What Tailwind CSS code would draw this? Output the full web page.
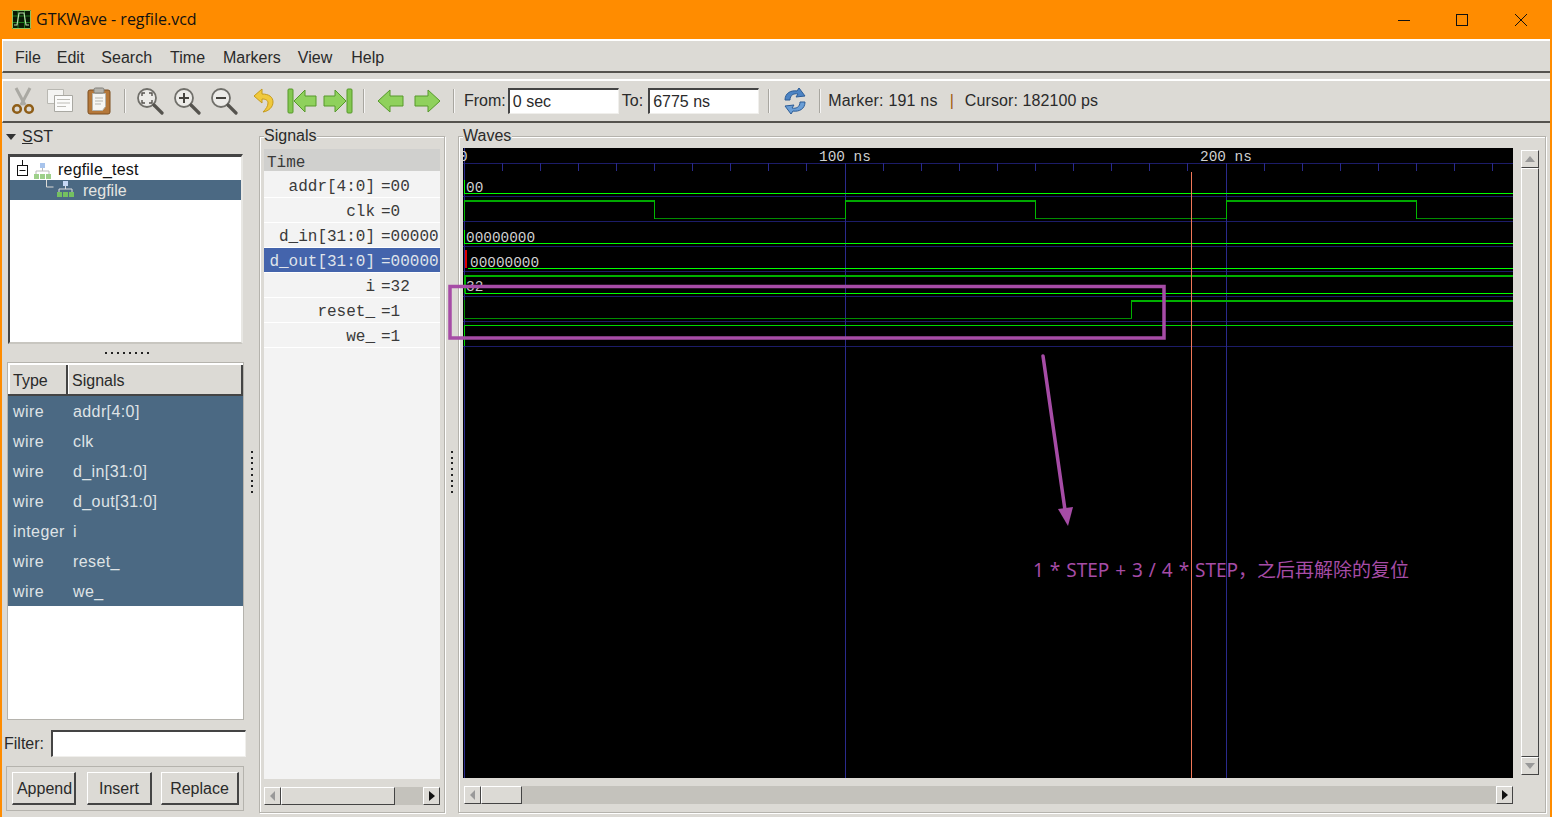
<!DOCTYPE html>
<html lang="en">
<head>
  <meta charset="UTF-8">
  <title>GTKWave - regfile.vcd</title>
  <script src="https://cdn.jsdelivr.net/npm/@tailwindcss/browser@4"></script>
</head>
<body class="bg-[#dcdad5] overflow-hidden">
<div class="relative w-[1552px] h-[817px] flex flex-col overflow-hidden border-x-2 border-[#ff8c00] bg-[#dcdad5] font-['Liberation_Sans',sans-serif] text-[16px] text-[#2a2a2a]">

  <!-- title bar -->
  <div class="h-[39px] -mx-[2px] shrink-0 bg-[#ff8c00] flex items-center text-[#111]">
    <svg class="ml-[12px] mt-[-1px]" width="19" height="19" viewBox="0 0 19 19">
      <rect width="19" height="19" fill="#0a1a05"/>
      <path d="M0.500 0.500h18v18h-18z" fill="none" stroke="#8fc060"/>
      <path d="M6 1v17M12.500 1v17M1 6h17M1 12.500h17" stroke="#1f7a1f"/>
      <path d="M2 15h3l2-12h5l2 12h3" fill="none" stroke="#b8d8a8" stroke-width="1.200"/>
    </svg>
    <span class="ml-[5px] mt-[-2px] font-['Open_Sans',sans-serif] text-[16px]">GTKWave - regfile.vcd</span>
    <div class="ml-auto flex items-center">
      <svg width="12" height="12" viewBox="0 0 12 12" class="mr-[46px]"><path d="M0 6.500h12" stroke="#111"/></svg>
      <svg width="12" height="12" viewBox="0 0 12 12" class="mr-[47px]"><rect x="0.500" y="0.500" width="11" height="11" fill="none" stroke="#111"/></svg>
      <svg width="12" height="12" viewBox="0 0 12 12" class="mr-[25px]"><path d="M0 0l12 12M12 0L0 12" stroke="#111"/></svg>
    </div>
  </div>

  <!-- menu bar -->
  <div class="h-[34px] shrink-0 flex items-center gap-[21px] pl-[12px] pt-[3px] bg-[#dcdad5] border-t-2 border-t-white border-b-2 border-b-[#55534e] border-l border-l-white">
    <span>File</span><span class="-ml-[5px]">Edit</span><span class="-ml-[4px]">Search</span><span class="-ml-[3px]">Time</span><span class="-ml-[3px]">Markers</span><span class="-ml-[4px]">View</span><span class="-ml-[2px]">Help</span>
  </div>

  <!-- toolbar -->
  <div class="mt-[6px] h-[44px] shrink-0 flex items-center pl-[8px] border-t-2 border-t-white border-b-2 border-b-[#55534e] border-l border-l-white">
    <!-- cut -->
    <svg width="24" height="28" viewBox="0 0 24 28">
      <path d="M5 1l9 17M19 1l-9 17" stroke="#aaa9a3" stroke-width="3"/>
      <circle cx="6" cy="22" r="3.800" fill="#dcdad5" stroke="#8f5e18" stroke-width="2.600"/>
      <circle cx="18" cy="22" r="3.800" fill="#dcdad5" stroke="#8f5e18" stroke-width="2.600"/>
    </svg>
    <!-- copy -->
    <svg class="ml-[11px]" width="28" height="26" viewBox="0 0 28 26">
      <path d="M1.500 1.500h16v14h-16z" fill="#f4f4f2" stroke="#b9b8b2"/>
      <path d="M8.500 7.500h18v16h-18z" fill="#fbfbfa" stroke="#a9a8a2"/>
      <path d="M11 11.500h13M11 15h13M11 18.500h9" stroke="#bdbcb6"/>
    </svg>
    <!-- paste -->
    <svg class="ml-[13px]" width="24" height="28" viewBox="0 0 24 28">
      <rect x="1" y="3" width="22" height="24" rx="2" fill="#b5783a" stroke="#7d4f20"/>
      <path d="M5.500 6.500h13v13l-3 4h-10z" fill="#f6f6f4" stroke="#b5b4ae"/>
      <path d="M8 11h8M8 14h8M8 17h6" stroke="#b5b4ae"/>
      <rect x="7" y="1" width="10" height="5" rx="1.500" fill="#b4b3ad" stroke="#807f79"/>
    </svg>
    <div class="ml-[13px] w-[2px] h-[24px] border-l border-l-[#a8a6a0] bg-white/70"></div>
    <!-- zoom fit -->
    <svg class="ml-[10px]" width="28" height="28" viewBox="0 0 28 28">
      <circle cx="11" cy="11" r="9" fill="#ecebe8" stroke="#706f6a" stroke-width="1.800"/>
      <path d="M18 18l8 8" stroke="#55534e" stroke-width="3.200" stroke-linecap="round"/>
      <path d="M6 9V6h3M13 6h3v3M16 13v3h-3M9 16H6v-3" fill="none" stroke="#55534e" stroke-width="1.400"/>
    </svg>
    <!-- zoom in -->
    <svg class="ml-[9px]" width="28" height="28" viewBox="0 0 28 28">
      <circle cx="11" cy="11" r="9" fill="#ecebe8" stroke="#706f6a" stroke-width="1.800"/>
      <path d="M18 18l8 8" stroke="#55534e" stroke-width="3.200" stroke-linecap="round"/>
      <path d="M6 11h10M11 6v10" stroke="#45433e" stroke-width="2"/>
    </svg>
    <!-- zoom out -->
    <svg class="ml-[9px]" width="28" height="28" viewBox="0 0 28 28">
      <circle cx="11" cy="11" r="9" fill="#ecebe8" stroke="#706f6a" stroke-width="1.800"/>
      <path d="M18 18l8 8" stroke="#55534e" stroke-width="3.200" stroke-linecap="round"/>
      <path d="M6 11h10" stroke="#45433e" stroke-width="2"/>
    </svg>
    <!-- undo -->
    <svg class="ml-[15px]" width="21" height="26" viewBox="0 0 21 26">
      <path d="M9 1L1 8l8 7v-4c4 0 6 1.500 6 4 0 3-2 6-5 9 6-1 10-5 10-10 0-5-4-8-11-8z" fill="#f0c93c" stroke="#c59a1c"/>
    </svg>
    <!-- first -->
    <svg class="ml-[13px]" width="30" height="26" viewBox="0 0 30 26">
      <rect x="1" y="1" width="5" height="24" rx="1" fill="#84c850" stroke="#56992b"/>
      <path d="M7 13L18 2v6h11v10H18v6z" fill="#8fd15c" stroke="#56992b" stroke-linejoin="round"/>
    </svg>
    <!-- last -->
    <svg class="ml-[6px]" width="30" height="26" viewBox="0 0 30 26">
      <rect x="24" y="1" width="5" height="24" rx="1" fill="#84c850" stroke="#56992b"/>
      <path d="M23 13L12 2v6H1v10h11v6z" fill="#8fd15c" stroke="#56992b" stroke-linejoin="round"/>
    </svg>
    <div class="ml-[10px] w-[2px] h-[24px] border-l border-l-[#a8a6a0] bg-white/70"></div>
    <!-- left / right -->
    <svg class="ml-[12px]" width="27" height="26" viewBox="0 0 27 26">
      <path d="M1 13L13 2v6h13v10H13v6z" fill="#8fd15c" stroke="#56992b" stroke-linejoin="round"/>
    </svg>
    <svg class="ml-[10px]" width="27" height="26" viewBox="0 0 27 26">
      <path d="M26 13L14 2v6H1v10h13v6z" fill="#8fd15c" stroke="#56992b" stroke-linejoin="round"/>
    </svg>
    <div class="ml-[12px] w-[2px] h-[24px] border-l border-l-[#a8a6a0] bg-white/70"></div>
    <span class="ml-[9px]">From:</span>
    <div class="ml-[2px] w-[111px] h-[26px] pl-[3px] bg-white border-t-2 border-l-2 border-[#444] border-b border-r border-b-[#f0efec] border-r-[#f0efec] leading-[23px]">0 sec</div>
    <span class="ml-[3px]">To:</span>
    <div class="ml-[5px] w-[111px] h-[26px] pl-[3px] bg-white border-t-2 border-l-2 border-[#444] border-b border-r border-b-[#f0efec] border-r-[#f0efec] leading-[23px]">6775 ns</div>
    <div class="ml-[9px] w-[2px] h-[24px] border-l border-l-[#a8a6a0] bg-white/70"></div>
    <!-- reload -->
    <svg class="ml-[13px]" width="24" height="28" viewBox="0 0 24 28">
      <path d="M2 13C2 6 8 3 14 4l2-3 6 8-9 1 2-3c-4-1-8 1-8 6z" fill="#4d84c4" stroke="#2c5c96"/>
      <path d="M22 15c0 7-6 10-12 9l-2 3-6-8 9-1-2 3c4 1 8-1 8-6z" fill="#6a9ed6" stroke="#2c5c96"/>
    </svg>
    <div class="ml-[12px] w-[2px] h-[24px] border-l border-l-[#a8a6a0] bg-white/70"></div>
    <span class="ml-[7px] whitespace-pre tracking-[0.2px]">Marker: 191 ns</span>
    <span class="ml-[12px] text-[#a05a10]">|</span>
    <span class="ml-[11px] whitespace-pre tracking-[0.1px]">Cursor: 182100 ps</span>
  </div>

  <!-- panes -->
  <div class="flex-1 flex min-h-0">

    <!-- SST column -->
    <aside class="w-[246px] shrink-0 flex flex-col pt-[3px]">
      <div class="h-[22px] flex items-center pl-[4px]">
        <svg width="10" height="8" viewBox="0 0 10 8"><path d="M0 1h10L5 7z" fill="#333"/></svg>
        <span class="ml-[6px]"><span class="underline">S</span>ST</span>
      </div>
      <div class="mt-[6px] ml-[6px] w-[235px] h-[190px] shrink-0 bg-white border-2 border-t-[3px] border-[#444] border-r-[#e8e7e3] border-b-[#c8c6c0] overflow-hidden">
        <div class="h-[23px] flex items-center pt-[3px]">
          <svg class="ml-[4px]" width="40" height="20" viewBox="0 0 40 20">
            <path d="M8.500 0v5" stroke="#111"/><rect x="3.500" y="5.500" width="10" height="10" fill="#fff" stroke="#111"/><path d="M5.500 10.500h6" stroke="#111"/>
            <rect x="26" y="3" width="5" height="5" fill="#a8c4ec"/><path d="M28.500 8v3M22 14v-3h13v3" fill="none" stroke="#bbb"/>
            <rect x="20" y="14" width="5" height="5" fill="#9ed08a"/><rect x="26" y="14" width="5" height="5" fill="#9ed08a"/><rect x="32" y="14" width="5" height="5" fill="#9ed08a"/>
          </svg>
          <span class="ml-[4px] tracking-[0.2px] text-[#111]">regfile_test</span>
        </div>
        <div class="h-[20px] bg-[#4b6983] flex items-center text-[#e6e6e2]">
          <svg class="ml-[36px]" width="34" height="20" viewBox="0 0 34 20">
            <path d="M0.500 0v7h7" fill="none" stroke="#dcdad5"/>
            <rect x="17" y="1" width="5" height="5" fill="#c6d8f4"/><path d="M19.500 6v3M13 12V9h13v3" fill="none" stroke="#ddd"/>
            <rect x="11" y="12" width="5" height="5" fill="#74c060"/><rect x="17" y="12" width="5" height="5" fill="#74c060"/><rect x="23" y="12" width="5" height="5" fill="#74c060"/>
          </svg>
          <span class="ml-[3px] pt-[1px]">regfile</span>
        </div>
      </div>
      <div class="h-[18px] shrink-0 flex items-center justify-center gap-[4px] pl-[4px]">
        <i class="w-[2px] h-[2px] bg-[#222]"></i><i class="w-[2px] h-[2px] bg-[#222]"></i><i class="w-[2px] h-[2px] bg-[#222]"></i><i class="w-[2px] h-[2px] bg-[#222]"></i><i class="w-[2px] h-[2px] bg-[#222]"></i><i class="w-[2px] h-[2px] bg-[#222]"></i><i class="w-[2px] h-[2px] bg-[#222]"></i><i class="w-[2px] h-[2px] bg-[#222]"></i>
      </div>
      <div class="ml-[5px] w-[237px] h-[358px] shrink-0 bg-white border border-[#b5b3ad] flex flex-col">
        <div class="h-[33px] shrink-0 flex bg-[#dcdad5] border-t-2 border-t-white border-b-2 border-b-[#444]">
          <div class="w-[60px] pl-[3px] pt-[1px] leading-[30px] border-r-2 border-r-[#444] border-l-2 border-l-white">Type</div>
          <div class="flex-1 pl-[3px] pt-[1px] leading-[30px] border-l border-l-white border-r-2 border-r-[#444]">Signals</div>
        </div>
        <div class="h-[210px] shrink-0 bg-[#4b6983] text-[#dfe3e6] tracking-[0.4px] grid grid-cols-[60px_1fr] auto-rows-[30px] items-center pl-[5px] pt-[1px]">
          <span>wire</span><span>addr[4:0]</span>
          <span>wire</span><span>clk</span>
          <span>wire</span><span>d_in[31:0]</span>
          <span>wire</span><span>d_out[31:0]</span>
          <span>integer</span><span>i</span>
          <span>wire</span><span>reset_</span>
          <span>wire</span><span>we_</span>
        </div>
      </div>
      <div class="mt-[10px] h-[27px] shrink-0 flex items-center pl-[2px]">
        <span>Filter:</span>
        <div class="ml-[7px] w-[195px] h-[27px] bg-white border-t-2 border-l-2 border-[#444] border-b border-r border-b-[#f0efec] border-r-[#f0efec]"></div>
      </div>
      <div class="mt-[9px] ml-[4px] w-[238px] h-[45px] shrink-0 border border-[#b5b3ad] flex items-center pl-[5px]">
        <div class="w-[64px] h-[33px] pt-[2px] pl-[2px] flex items-center justify-center border-t border-l border-t-white border-l-white border-b-2 border-r-2 border-b-[#444] border-r-[#444]">Append</div>
        <div class="ml-[11px] w-[65px] h-[33px] pt-[2px] flex items-center justify-center border-t border-l border-t-white border-l-white border-b-2 border-r-2 border-b-[#444] border-r-[#444]">Insert</div>
        <div class="ml-[9px] w-[78px] h-[33px] pt-[2px] flex items-center justify-center border-t border-l border-t-white border-l-white border-b-2 border-r-2 border-b-[#444] border-r-[#444]">Replace</div>
      </div>
    </aside>

    <!-- handle -->
    <div class="w-[11px] shrink-0 flex flex-col items-center justify-center gap-[3.700px] pt-[4px] pr-[3px]">
      <i class="w-[2px] h-[2px] bg-[#222]"></i><i class="w-[2px] h-[2px] bg-[#222]"></i><i class="w-[2px] h-[2px] bg-[#222]"></i><i class="w-[2px] h-[2px] bg-[#222]"></i><i class="w-[2px] h-[2px] bg-[#222]"></i><i class="w-[2px] h-[2px] bg-[#222]"></i><i class="w-[2px] h-[2px] bg-[#222]"></i><i class="w-[2px] h-[2px] bg-[#222]"></i>
    </div>

    <!-- Signals frame -->
    <section class="relative w-[186px] h-[677px] mt-[13px] shrink-0 border border-[#b5b3ad] shadow-[inset_1px_1px_0_#fff,1px_1px_0_#fff] pl-[4px] pr-[4px] pt-[12px]">
      <span class="absolute left-[4px] -top-[13px] bg-[#dcdad5] pr-[1px]">Signals</span>
      <div class="h-[630px] bg-[#f3f3f3] font-['Liberation_Mono',monospace] text-[16px] text-[#3a3a3a] font-medium overflow-hidden">
        <div class="h-[22px] mb-[2px] bg-[#d0d0ce] pl-[3px] leading-[29px]">Time</div>
        <div class="h-[25px] pt-[3px] flex items-center whitespace-pre border-b border-b-white"><span class="w-[111px] text-right shrink-0 mr-[6px]">addr[4:0]</span>=00</div>
        <div class="h-[25px] pt-[3px] flex items-center whitespace-pre border-b border-b-white"><span class="w-[111px] text-right shrink-0 mr-[6px]">clk</span>=0</div>
        <div class="h-[25px] pt-[3px] flex items-center whitespace-pre border-b border-b-white"><span class="w-[111px] text-right shrink-0 mr-[6px]">d_in[31:0]</span>=00000</div>
        <div class="h-[25px] pt-[3px] flex items-center whitespace-pre border-b border-b-white bg-[#4464ac] text-[#dfe3ea]"><span class="w-[111px] text-right shrink-0 mr-[6px]">d_out[31:0]</span>=00000</div>
        <div class="h-[25px] pt-[3px] flex items-center whitespace-pre border-b border-b-white"><span class="w-[111px] text-right shrink-0 mr-[6px]">i</span>=32</div>
        <div class="h-[25px] pt-[3px] flex items-center whitespace-pre border-b border-b-white"><span class="w-[111px] text-right shrink-0 mr-[6px]">reset_</span>=1</div>
        <div class="h-[25px] pt-[3px] flex items-center whitespace-pre border-b border-b-white"><span class="w-[111px] text-right shrink-0 mr-[6px]">we_</span>=1</div>
      </div>
      <!-- h scrollbar -->
      <div class="mt-[8px] h-[18px] flex bg-[#c4c2bc]">
        <div class="w-[17px] flex items-center justify-center bg-[#dcdad5] border-t border-l border-white border-b border-r border-b-[#444] border-r-[#444]"><svg width="6" height="10" viewBox="0 0 6 10"><path d="M5 0v10L0 5z" fill="#999"/></svg></div>
        <div class="w-[114px] bg-[#dcdad5] border-t border-l border-white border-b border-r border-b-[#444] border-r-[#444]"></div>
        <div class="ml-auto w-[17px] flex items-center justify-center bg-[#dcdad5] border-t border-l border-white border-b border-r border-b-[#444] border-r-[#444]"><svg width="6" height="10" viewBox="0 0 6 10"><path d="M0 0v10l6-5z" fill="#111"/></svg></div>
      </div>
    </section>

    <!-- handle -->
    <div class="w-[13px] shrink-0 flex flex-col items-center justify-center gap-[3.700px] pt-[4px]">
      <i class="w-[2px] h-[2px] bg-[#222]"></i><i class="w-[2px] h-[2px] bg-[#222]"></i><i class="w-[2px] h-[2px] bg-[#222]"></i><i class="w-[2px] h-[2px] bg-[#222]"></i><i class="w-[2px] h-[2px] bg-[#222]"></i><i class="w-[2px] h-[2px] bg-[#222]"></i><i class="w-[2px] h-[2px] bg-[#222]"></i><i class="w-[2px] h-[2px] bg-[#222]"></i>
    </div>

    <!-- Waves frame -->
    <section class="relative w-[1088px] h-[677px] mt-[13px] shrink-0 border border-[#b5b3ad] shadow-[inset_1px_1px_0_#fff,1px_1px_0_#fff] pl-[4px] pt-[11px]">
      <span class="absolute left-[4px] -top-[13px] bg-[#dcdad5] pr-[1px]">Waves</span>
      <div class="flex h-[630px]">
        <svg id="waves" class="w-[1050px] h-[630px] shrink-0 bg-black font-['Liberation_Mono',monospace]" viewBox="463 148 1050 630" fill="none" shape-rendering="crispEdges">
          <!-- grid -->
          <path d="M463 163.500H1513M463 196.500H1513M463 221.500H1513M463 246.500H1513M463 271.500H1513M463 296.500H1513M463 321.500H1513M463 346.500H1513" stroke="#1c1c68"/>
          <path d="M464.500 148V778M845.500 163V778M1226.500 163V778" stroke="#2a2a8c"/>
          <path id="ticks" stroke="#2a2a8c"/>
          <text x="459" y="161" font-size="14.400" fill="#d0d0d0">0</text>
          <text x="819" y="161" font-size="14.400" fill="#d0d0d0" xml:space="preserve">100 ns</text>
          <text x="1200" y="161" font-size="14.400" fill="#d0d0d0" xml:space="preserve">200 ns</text>
          <!-- addr -->
          <path d="M464.500 180v13.500H1513" stroke="#00ff00"/>
          <text x="466" y="192" font-size="14.400" fill="#d0d0d0">00</text>
          <!-- clk -->
          <path d="M464 201H654.500M845 201H1035.500M1226 201H1416.500" stroke="#00a800" stroke-width="2"/>
          <path d="M654.500 218.500H845.500M1035.500 218.500H1226.500M1416.500 218.500H1513" stroke="#008c00"/>
          <path d="M464.500 200v21M654.500 200V219M845.500 200V219M1035.500 200V219M1226.500 200V219M1416.500 200V219" stroke="#00b800"/>
          <!-- d_in -->
          <path d="M464.500 230v13.500H1513" stroke="#00ff00"/>
          <text x="466" y="242" font-size="14.400" fill="#d0d0d0">00000000</text>
          <!-- d_out -->
          <path d="M467.500 268.500H1513" stroke="#00ff00"/>
          <path d="M465.500 250v18" stroke="#e00000" stroke-width="2"/>
          <text x="470" y="267" font-size="14.400" fill="#d0d0d0">00000000</text>
          <!-- i -->
          <path d="M1513 276H464.500V293" stroke="#00b000" stroke-width="2"/>
          <path d="M465 293.500H1513" stroke="#00ff00"/>
          <text x="466" y="291" font-size="14.400" fill="#c8c8c8">32</text>
          <!-- reset_ -->
          <path d="M464.500 300V318.500H1131.500" stroke="#008c00"/>
          <path d="M1131.500 318V301H1513" stroke="#00b000"/>
          <path d="M1131 301H1513" stroke="#00b000" stroke-width="2"/>
          <!-- we_ -->
          <path d="M464.500 325.500H1513M464.500 325V346" stroke="#00d800"/>
          <!-- cursor -->
          <path d="M1191.500 172V778" stroke="#f07858"/>
        </svg>
        <!-- v scrollbar -->
        <div class="ml-[8px] mt-[2px] w-[18px] h-[625px] flex flex-col bg-[#c4c2bc]">
          <div class="h-[18px] flex items-center justify-center bg-[#dcdad5] border-t border-l border-white border-b border-r border-b-[#444] border-r-[#444]"><svg width="10" height="6" viewBox="0 0 10 6"><path d="M0 6h10L5 0z" fill="#999"/></svg></div>
          <div class="flex-1 bg-[#dcdad5] border-t border-l border-white border-b border-r border-b-[#444] border-r-[#444]"></div>
          <div class="h-[18px] flex items-center justify-center bg-[#dcdad5] border-t border-l border-white border-b border-r border-b-[#444] border-r-[#444]"><svg width="10" height="6" viewBox="0 0 10 6"><path d="M0 0h10L5 6z" fill="#999"/></svg></div>
        </div>
      </div>
      <!-- h scrollbar -->
      <div class="mt-[8px] w-[1049px] h-[18px] ml-[1px] flex bg-[#c4c2bc]">
        <div class="w-[17px] flex items-center justify-center bg-[#dcdad5] border-t border-l border-white border-b border-r border-b-[#444] border-r-[#444]"><svg width="6" height="10" viewBox="0 0 6 10"><path d="M5 0v10L0 5z" fill="#999"/></svg></div>
        <div class="w-[41px] bg-[#dcdad5] border-t border-l border-white border-b border-r border-b-[#444] border-r-[#444]"></div>
        <div class="ml-auto w-[17px] flex items-center justify-center bg-[#dcdad5] border-t border-l border-white border-b border-r border-b-[#444] border-r-[#444]"><svg width="6" height="10" viewBox="0 0 6 10"><path d="M0 0v10l6-5z" fill="#111"/></svg></div>
      </div>
    </section>
  </div>

  <!-- annotation drawn over the screenshot -->
  <svg class="absolute -left-[2px] top-0 pointer-events-none" width="1552" height="817" viewBox="0 0 1552 817" fill="none">
    <rect x="450" y="286.500" width="714" height="51.500" stroke="#a64ca6" stroke-width="3.500"/>
    <path d="M1043 356L1065 510" stroke="#a64ca6" stroke-width="3.500" stroke-linecap="round"/>
    <path d="M1058 509L1073 507L1068 526z" fill="#a64ca6"/>
  </svg>
  <div class="absolute left-[1031px] top-[556px] whitespace-pre [word-spacing:1px] font-['Noto_Sans','Noto_Sans_CJK_SC',sans-serif] text-[19px] leading-[28px] text-[#a64ca6]">1 * STEP + 3 / 4 * STEP，之后再解除的复位</div>
</div>

<script>
  // ruler ticks every 10 ns
  let d = '';
  for (let i = 1; i < 28; i++) {
    const x = Math.floor(464 + i * 38.1) + 0.5;
    d += `M${x} 163V171`;
  }
  document.getElementById('ticks').setAttribute('d', d);
</script>
</body>
</html>
